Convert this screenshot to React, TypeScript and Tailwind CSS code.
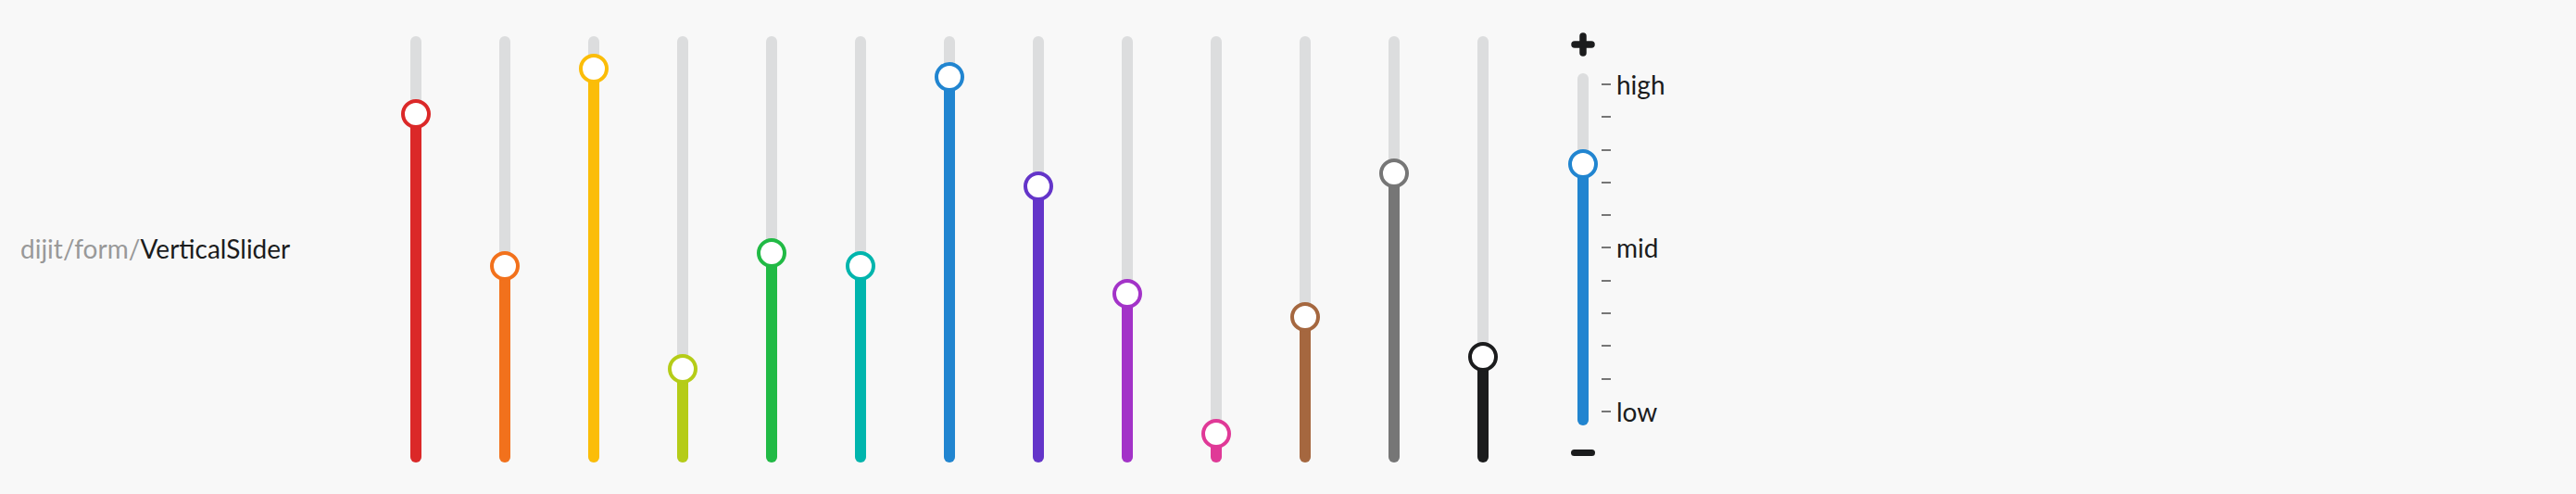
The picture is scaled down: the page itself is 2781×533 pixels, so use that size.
import React from 'react';

const TRACK_H = 460;

const sliders = [
  { color: '#db2828', pos: 376 },
  { color: '#f2711c', pos: 212 },
  { color: '#fbbd08', pos: 425 },
  { color: '#b5cc18', pos: 101 },
  { color: '#21ba45', pos: 226 },
  { color: '#00b5ad', pos: 212 },
  { color: '#2185d0', pos: 416 },
  { color: '#6435c9', pos: 298 },
  { color: '#a333c8', pos: 182 },
  { color: '#e03997', pos: 31 },
  { color: '#a5673f', pos: 157 },
  { color: '#767676', pos: 312 },
  { color: '#1b1c1d', pos: 114 },
];

const ticks = ['high', '', '', '', '', 'mid', '', '', '', '', 'low'];

const Slider = ({ color, pos, height }: { color: string; pos: number; height: number }) => (
  <div className="w-[32px] flex justify-center">
    <div className="relative w-[12px] rounded-full bg-[#dcddde]" style={{ height }}>
      {/* filled part */}
      <div className="absolute bottom-0 left-0 w-[12px] rounded-b-full" style={{ height: pos, backgroundColor: color }} />
      {/* knob */}
      <div
        className="absolute left-1/2 w-[32px] h-[32px] -ml-[16px] -mb-[16px] rounded-full border-4 bg-white"
        style={{ bottom: pos, borderColor: color }}
      />
    </div>
  </div>
);

const App = () => {
  return (
    <div className="h-[533px] w-full bg-[#f8f8f8] flex items-start" style={{ fontFamily: 'Lato, "Noto Sans", sans-serif' }}>
      {/* title */}
      <div className="w-[433px] shrink-0 pl-[22px] mt-[254px] text-[28px] leading-none whitespace-nowrap">
        <span className="text-[#999999]">dijit/form/</span>
        <span className="text-[#1b1c1d]">VerticalSlider</span>
      </div>

      {/* colored sliders */}
      <div className="flex gap-[64px] pt-[39px] shrink-0">
        {sliders.map((s, i) => (
          <Slider key={i} color={s.color} pos={s.pos} height={TRACK_H} />
        ))}
      </div>

      {/* slider with buttons and rule labels */}
      <div className="ml-[76px] pt-[35px] flex shrink-0">
        <div className="flex flex-col items-center w-[32px]">
          <svg width="26" height="26" viewBox="0 0 26 26">
            <line x1="4" y1="13" x2="22" y2="13" stroke="#1b1c1d" strokeWidth="7.5" strokeLinecap="round" />
            <line x1="13" y1="4" x2="13" y2="22" stroke="#1b1c1d" strokeWidth="7.5" strokeLinecap="round" />
          </svg>
          <div className="mt-[18px]">
            <Slider color="#2185d0" pos={282} height={380} />
          </div>
          <svg width="26" height="7" viewBox="0 0 26 7" className="mt-[26px]">
            <line x1="3.5" y1="3.5" x2="22.5" y2="3.5" stroke="#1b1c1d" strokeWidth="7" strokeLinecap="round" />
          </svg>
        </div>
        <div className="ml-[4px] mt-[55px] h-[355px] flex flex-col justify-between">
          {ticks.map((label, i) => (
            <div key={i} className="h-[2px] flex items-center">
              <div className="w-[10px] h-[2px] bg-[#767676]" />
              {label && (
                <span className="ml-[6px] text-[28px] leading-none text-[#1b1c1d] whitespace-nowrap">{label}</span>
              )}
            </div>
          ))}
        </div>
      </div>
    </div>
  );
};

export default App;
